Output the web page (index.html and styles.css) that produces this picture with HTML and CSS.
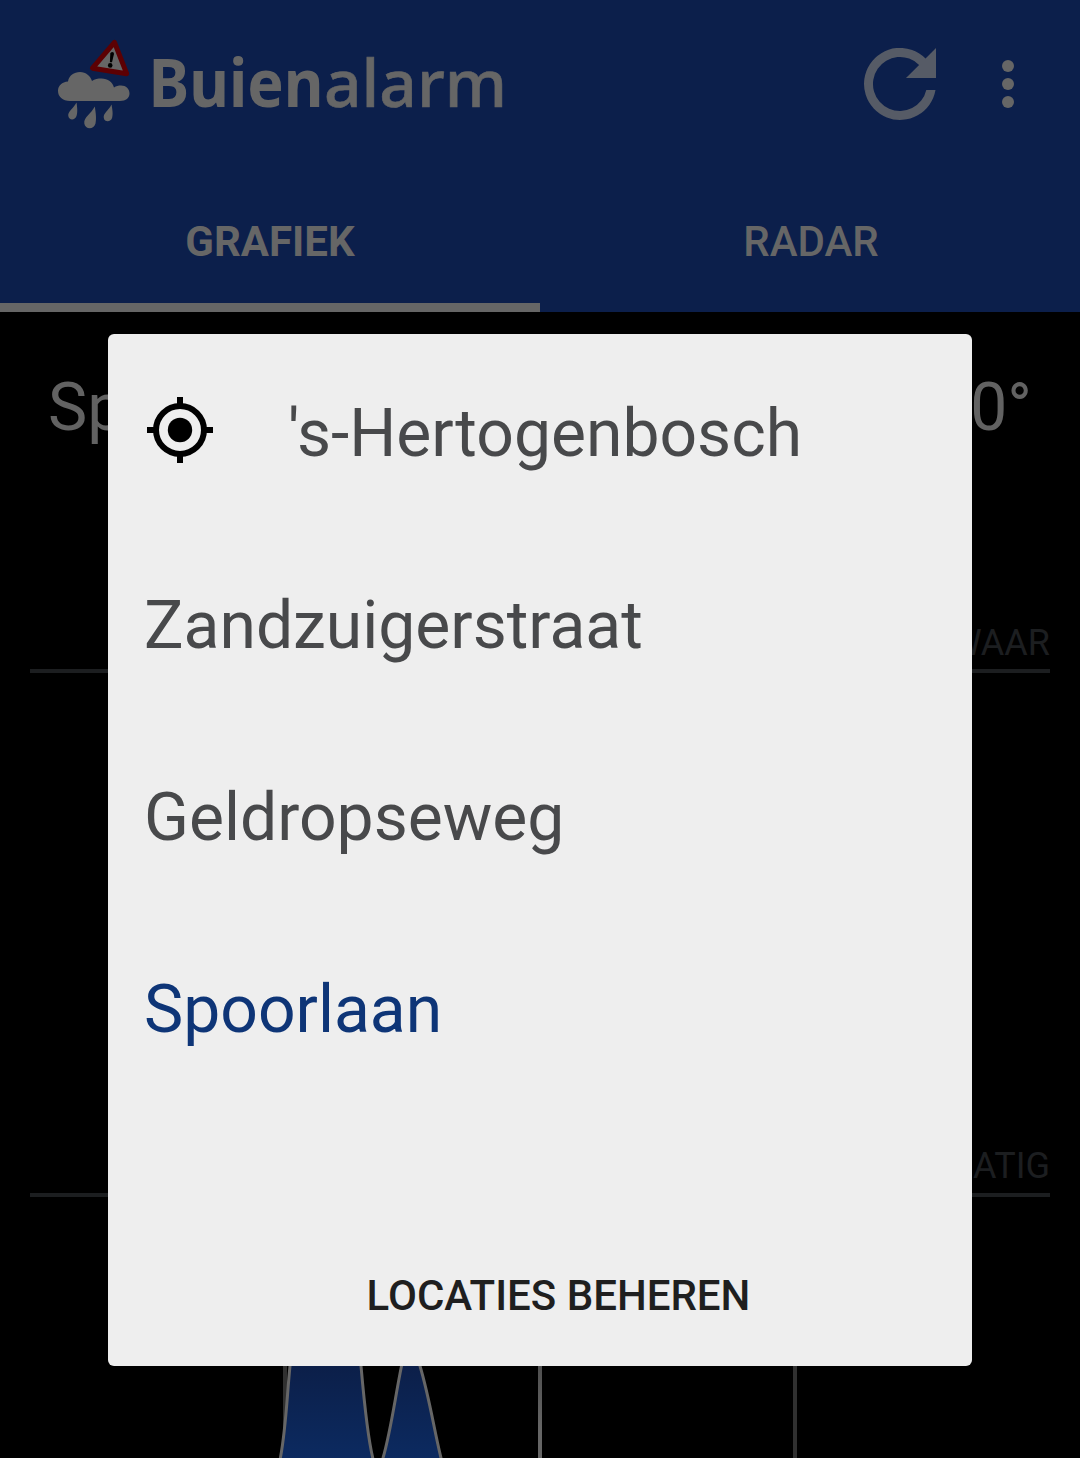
FILE: index.html
```html
<!DOCTYPE html>
<html lang="nl">
<head>
<meta charset="utf-8">
<title>Buienalarm</title>
<link rel="stylesheet" href="styles.css">
</head>
<body>
<div class="app">
  <header class="header">
    <div class="toolbar">
      <svg class="logo" width="460" height="100" viewBox="50 34 460 100" role="img">
        <g class="logo-light">
          <path d="M70 101C62.500 101 58 96.500 58 91C58 85.500 62 82 68 81.500C69 75.500 74 72 80 72C86 72 90.500 76 92 81C94.500 79 98 78.500 101.500 78.500C108 78.500 112.500 82 114 87.500C116 86 118.500 85.500 121 85.500C126 85.500 129.500 89 129.500 93.500C129.500 98 126 101 120 101Z"/>
          <path d="M76.500 102.500C77.500 109 77.500 113 76.500 116C75 120.500 69 120.500 68.300 116C67.500 111.500 73 109 76.500 102.500Z"/>
          <path d="M94.800 106.500C96 114 96.500 119 95.500 123.500C94 130 85 129.500 84.300 123.500C83.500 117 91 114 94.800 106.500Z"/>
          <path d="M111.500 104.500C112.700 111 113 114.500 112.200 117.500C111 122.500 104.500 122.500 103.800 118C103 113 108 111.500 111.500 104.500Z"/>
        </g>
        <path class="logo-sign" d="M114.500 42.300L92.500 68.200L126.700 73.700Z"/>
        <path class="logo-mark" d="M110.300 53.500Q110.600 52 112.200 52Q114.200 52.100 114 54L112 62.300H109.900Z"/>
        <circle class="logo-mark" cx="110.200" cy="65.400" r="2.300"/>
        <text class="logo-bold" x="148.500" y="107" textLength="175" lengthAdjust="spacingAndGlyphs">Buien</text>
        <text class="logo-regular" x="324" y="107" textLength="183" lengthAdjust="spacingAndGlyphs">alarm</text>
      </svg>
      <div class="actions">
        <svg class="refresh" width="72" height="72" viewBox="0 0 72 72"><path d="M72 0V30H42L55.100 16.900A27 27 0 1 0 62.300 42H71.500A36 36 0 1 1 61.500 10.500Z"/></svg>
        <div class="more"><i></i><i></i><i></i></div>
      </div>
    </div>
    <nav class="tabs">
      <div class="tab tab-active">GRAFIEK</div>
      <div class="tab tab-idle">RADAR</div>
    </nav>
  </header>
  <main class="content">
    <div class="current"><span>Spoorlaan</span><span>10°</span></div>
    <div class="level level-heavy">ZWAAR</div>
    <div class="level level-moderate">MATIG</div>
    <svg class="graph" width="1080" height="261" viewBox="0 1197 1080 261">
      <defs>
        <linearGradient id="rain" gradientUnits="userSpaceOnUse" x1="0" y1="1366" x2="0" y2="1458">
          <stop offset="0" stop-color="#0c1f49"/><stop offset="1" stop-color="#0c2a60"/>
        </linearGradient>
        <linearGradient id="now" gradientUnits="userSpaceOnUse" x1="0" y1="1240" x2="0" y2="1430">
          <stop offset="0" stop-color="#222"/><stop offset="1" stop-color="#666"/>
        </linearGradient>
      </defs>
      <path class="tick" d="M285 1300V1458M795 1300V1458"/>
      <rect x="538" y="1240" width="4" height="218" fill="url(#now)"/>
      <path class="rain" d="M280 1460C286 1430 287 1395 290 1366C297 1300 355 1300 361 1366C364 1400 367 1435 373 1459C376 1466 380 1466 383 1458C391 1430 395 1398 401.500 1366C405 1350 415 1350 420 1366C430 1400 434 1430 441.500 1460"/>
    </svg>
  </main>
</div>
<section class="dialog" role="dialog">
  <div class="item">
    <svg class="locate" width="72" height="72" viewBox="-36 -36 72 72"><circle r="12.200"/><circle class="ring" r="24"/><path d="M-3-33H3V-24H-3ZM-3 24H3V33H-3ZM-33-3H-24V3H-33ZM24-3H33V3H24Z"/></svg>
    <span>'s-Hertogenbosch</span>
  </div>
  <div class="item"><span>Zandzuigerstraat</span></div>
  <div class="item"><span>Geldropseweg</span></div>
  <div class="item item-selected"><span>Spoorlaan</span></div>
  <button class="manage">LOCATIES BEHEREN</button>
</section>
</body>
</html>
```
FILE: styles.css
```css
* { box-sizing: border-box; }
body { margin: 0; background: #000; font-family: Roboto, sans-serif; }
.app { height: 1458px; display: flex; flex-direction: column; overflow: hidden; }

.header { height: 312px; background: #0c1f4b; color: #666; }
.toolbar { height: 168px; display: flex; align-items: center; justify-content: space-between; padding: 0 66px 0 50px; }
.logo { display: block; }
.logo-light, .logo-bold, .logo-regular { fill: #666; }
.logo-bold, .logo-regular { font-family: "Noto Sans", sans-serif; font-size: 67px; }
.logo-bold { font-weight: 700; }
.logo-regular { font-weight: 500; font-size: 66px; stroke: #666; stroke-width: .6; }
.logo-sign { fill: #666; stroke: #5c0003; stroke-width: 5; stroke-linejoin: round; }
.logo-mark { fill: #000; }
.actions { display: flex; align-items: center; gap: 66px; }
.refresh { fill: #565b66; }
.more { display: flex; flex-direction: column; gap: 6px; }
.more i { width: 12px; height: 12px; border-radius: 50%; background: #666; }
.tabs { display: grid; grid-template-columns: 1fr 1fr; height: 144px; }
.tab { display: flex; justify-content: center; padding-top: 49px; font-size: 42px; line-height: 49px; font-weight: 500; }
.tab-active { font-weight: 700; border-bottom: 9px solid #666; }
.tab-idle { padding-left: 2px; }

.content { flex: 1; display: flex; flex-direction: column; }
.current { display: flex; justify-content: space-between; margin-top: 56px; padding: 0 48px; font-size: 66px; line-height: 80px; color: #626262; }
.level { margin: 0 30px; border-bottom: 4px solid #1c1e20; color: #1c1e20; font-size: 36px; line-height: 44px; height: 52px; font-weight: 400; text-align: right; }
.level-heavy { margin-top: 173px; }
.level-moderate { margin-top: 472px; line-height: 42px; }
.graph { display: block; }
.tick { stroke: #303030; stroke-width: 4; fill: none; }
.rain { fill: url(#rain); stroke: #666; stroke-width: 3; }

.dialog { position: absolute; left: 108px; top: 334px; width: 864px; height: 1032px; border-radius: 6px; background: #eee; display: flex; flex-direction: column; }
.item { flex: none; height: 192px; display: flex; align-items: center; gap: 72px; padding: 0 36px; font-size: 66px; line-height: 78px; color: #48494b; }
.item span { padding-top: 8px; }
.item-selected { color: #0e3577; }
.ring { fill: none; stroke: #000; stroke-width: 6; }
.manage { flex: none; margin: 124px 0 0 37px; padding: 0; border: 0; background: none; font: 500 42px/140px Roboto, sans-serif; color: #1f1f1f; }
```
